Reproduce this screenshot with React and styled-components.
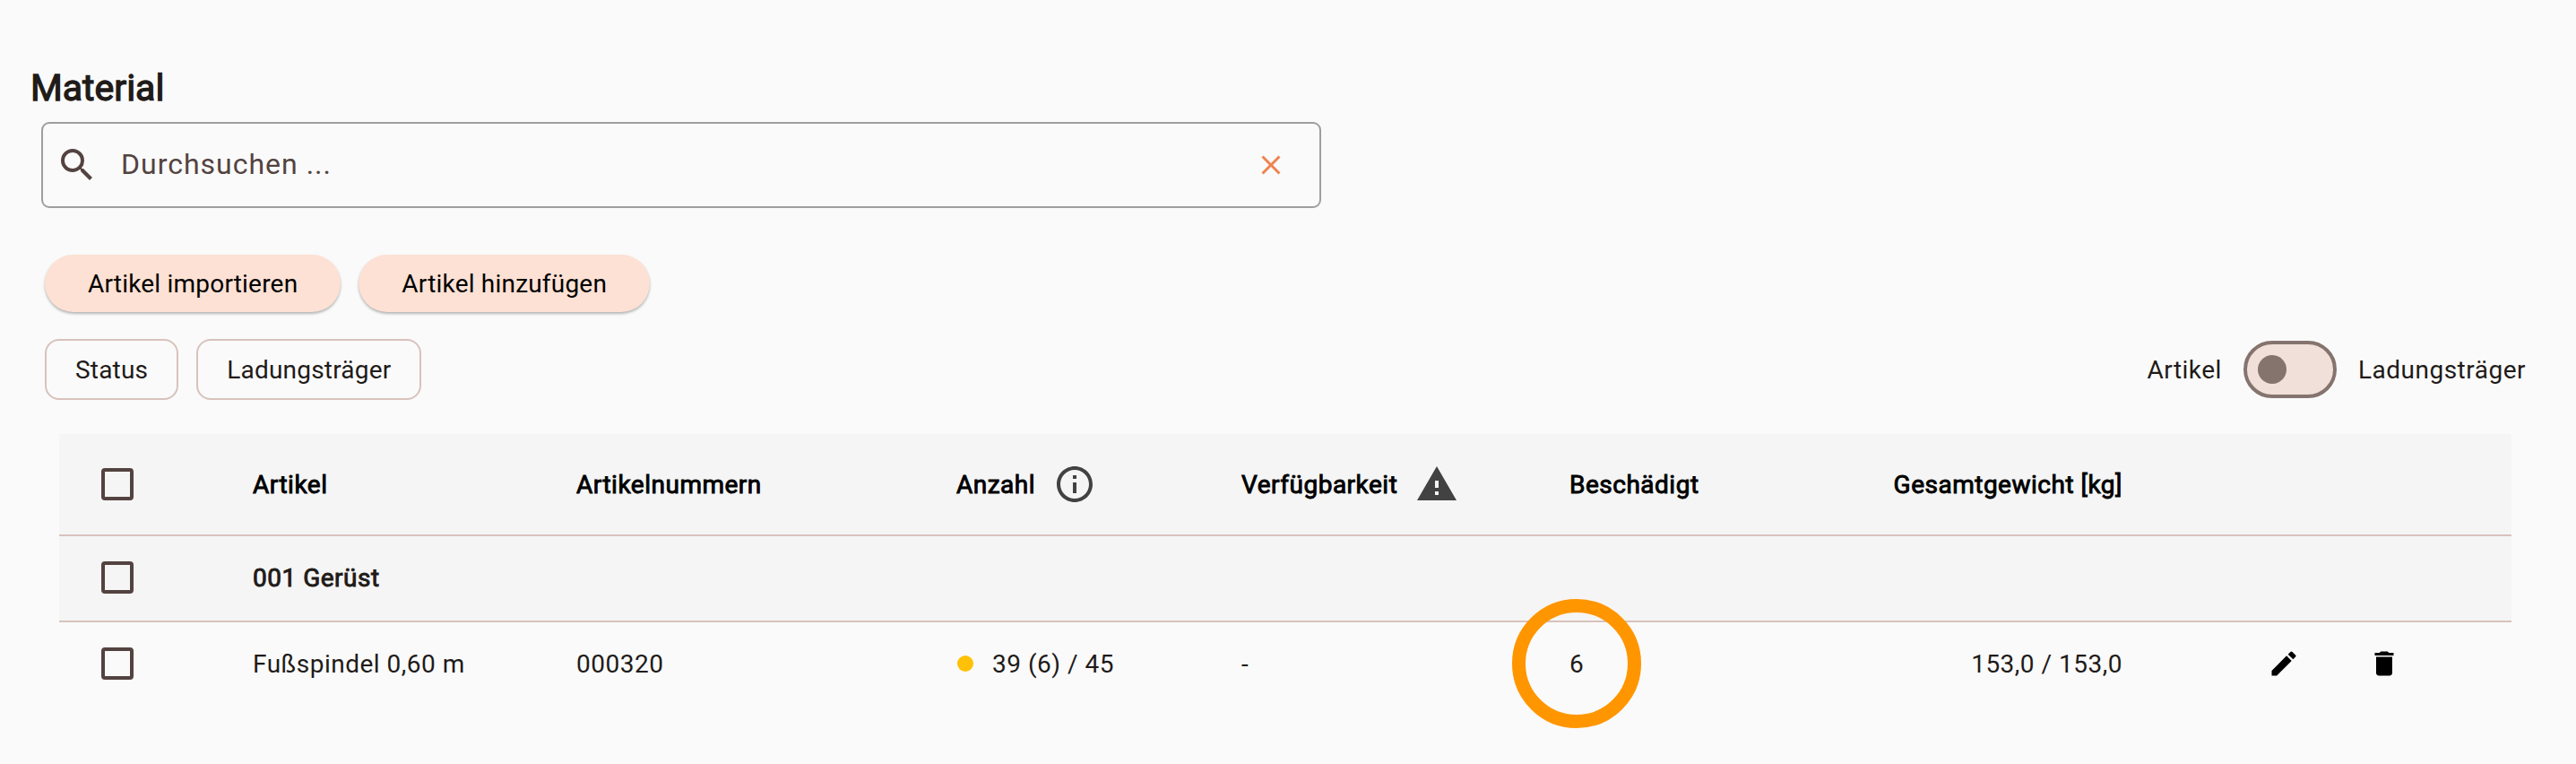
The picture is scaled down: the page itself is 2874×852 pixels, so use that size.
import { useState } from "react";
import styled, { createGlobalStyle } from "styled-components";
import { MdSearch, MdClose, MdInfoOutline, MdWarning, MdEdit, MdDelete } from "react-icons/md";

const articles = [{ id: 1, name: "Fußspindel 0,60 m", number: "000320", amount: "39 (6) / 45", available: "-", damaged: "6", weight: "153,0 / 153,0" }];

const App = () => {
  const [checked, setChecked] = useState(false);

  return (
    <Page>
      <GlobalStyle />
      <Title>Material</Title>
      <SearchBox>
        <MdSearch size={48} />
        <SearchInput placeholder="Durchsuchen ..." />
        <ClearButton>
          <MdClose size={36} />
        </ClearButton>
      </SearchBox>
      <Actions>
        <ActionButton>Artikel importieren</ActionButton>
        <ActionButton>Artikel hinzufügen</ActionButton>
      </Actions>
      <Filters>
        <Chip>Status</Chip>
        <Chip>Ladungsträger</Chip>
        <SwitchArea>
          <span>Artikel</span>
          <Switch onClick={() => setChecked(!checked)} className={checked ? "switch--checked" : ""}>
            <Thumb />
          </Switch>
          <span>Ladungsträger</span>
        </SwitchArea>
      </Filters>
      <Table>
        <HeadRow>
          <Checkbox />
          <Cell>Artikel</Cell>
          <Cell>Artikelnummern</Cell>
          <Cell $gap={20}>
            Anzahl
            <MdInfoOutline size={48} />
          </Cell>
          <Cell $gap={20}>
            Verfügbarkeit
            <MdWarning size={48} />
          </Cell>
          <Cell>Beschädigt</Cell>
          <Cell $right>Gesamtgewicht [kg]</Cell>
        </HeadRow>
        <GroupRow>
          <Checkbox />
          <Cell>001 Gerüst</Cell>
        </GroupRow>
        {articles.map((article) => (
          <ArticleRow key={article.id}>
            <Checkbox />
            <Cell>{article.name}</Cell>
            <Cell>{article.number}</Cell>
            <Cell $gap={21}>
              <Dot />
              {article.amount}
            </Cell>
            <Cell>{article.available}</Cell>
            <Cell>
              <Damaged>{article.damaged}</Damaged>
            </Cell>
            <Cell $right>{article.weight}</Cell>
            <RowActions>
              <MdEdit size={36} />
              <MdDelete size={36} />
            </RowActions>
          </ArticleRow>
        ))}
      </Table>
    </Page>
  );
};

export default App;

const GlobalStyle = createGlobalStyle`
  *, *::after {
    box-sizing: border-box;
  }
  body {
    margin: 0;
    background-color: #fafafa;
  }
  button, input {
    font: inherit;
    letter-spacing: inherit;
  }
`;
const Page = styled.div`
  height: 852px;
  padding: 72px 56px 0 34px;
  overflow: hidden;
  font-family: Roboto, sans-serif;
  font-size: 28px;
  letter-spacing: 0.5px;
  color: #1f1b19;
`;
const Title = styled.h1`
  margin: 0;
  height: 64px;
  font-size: 41px;
  line-height: 52px;
  font-weight: 400;
  letter-spacing: 0;
  -webkit-text-stroke: 1.3px currentColor;
`;
const SearchBox = styled.div`
  display: flex;
  align-items: center;
  width: 1428px;
  height: 96px;
  margin-left: 12px;
  padding: 0 36px 0 14px;
  border: 2px solid #9e9e9e;
  border-radius: 9px;
  color: #534340;
`;
const SearchInput = styled.input`
  flex: 1;
  margin-left: 25px;
  padding: 0 0 2px;
  border: none;
  outline: none;
  background: transparent;
  font-size: 32px;
  letter-spacing: 1px;

  &::placeholder {
    color: #534340;
    opacity: 1;
  }
`;
const ClearButton = styled.button`
  display: flex;
  padding: 0;
  border: none;
  background: none;
  color: #f0824f;
`;
const Actions = styled.div`
  display: flex;
  gap: 20px;
  margin: 52px 0 0 16px;
`;
const ActionButton = styled.button`
  height: 64px;
  padding: 0 48px;
  border: none;
  border-radius: 32px;
  background-color: #fde1d4;
  box-shadow: 0 2px 3px rgba(0, 0, 0, 0.28);
  color: #000;
  letter-spacing: 0.2px;
`;
const Filters = styled.div`
  display: flex;
  align-items: center;
  gap: 20px;
  margin: 30px 0 0 16px;
`;
const Chip = styled.button`
  height: 68px;
  padding: 0 32px;
  border: 2px solid #d8c2bc;
  border-radius: 16px;
  background: none;
  color: #1f1b19;
  letter-spacing: 0.2px;
`;
const SwitchArea = styled.div`
  display: flex;
  align-items: center;
  gap: 24px;
  margin-left: auto;
`;
const Switch = styled.div`
  display: flex;
  align-items: center;
  width: 104px;
  height: 64px;
  padding: 0 12px;
  border: 4px solid #85736e;
  border-radius: 32px;
  background-color: #f1dfda;

  &.switch--checked {
    justify-content: flex-end;
  }
`;
const Thumb = styled.div`
  width: 32px;
  height: 32px;
  border-radius: 50%;
  background-color: #85736e;
`;
const Table = styled.div`
  width: 2736px;
  margin: 38px 0 0 32px;
`;
const Row = styled.div`
  display: grid;
  grid-template-columns: 169px 361px 424px 318px 366px 360px 257px 1fr;
  align-items: center;
  height: 96px;
  padding-left: 47px;
`;
const HeadRow = styled(Row)`
  height: 112px;
  background-color: #f5f5f5;
  -webkit-text-stroke: 0.9px currentColor;
  color: #000;

  & svg {
    color: #424242;
  }
`;
const GroupRow = styled(Row)`
  background-color: #f5f5f5;
  box-shadow: inset 0 2px 0 #d8c2bc;
  -webkit-text-stroke: 0.9px currentColor;
`;
const ArticleRow = styled(Row)`
  box-shadow: inset 0 2px 0 #d8c2bc;
`;
const Cell = styled.div`
  display: flex;
  align-items: center;
  justify-content: ${({ $right }) => ($right ? "flex-end" : "flex-start")};
  gap: ${({ $gap }) => $gap || 0}px;
  white-space: nowrap;
`;
const Checkbox = styled.div`
  width: 36px;
  height: 36px;
  border: 4px solid #534340;
  border-radius: 4px;
`;
const Dot = styled.div`
  width: 18px;
  height: 18px;
  margin-left: 1px;
  border-radius: 50%;
  background-color: #ffc107;
`;
// orange ring around the damaged count
const Damaged = styled.div`
  position: relative;

  &::after {
    content: "";
    position: absolute;
    top: 50%;
    left: 50%;
    width: 144px;
    height: 144px;
    border: 15px solid #ff9600;
    border-radius: 50%;
    transform: translate(-50%, -50%);
  }
`;
const RowActions = styled.div`
  display: flex;
  gap: 76px;
  padding-left: 162px;
  color: #000;
`;
